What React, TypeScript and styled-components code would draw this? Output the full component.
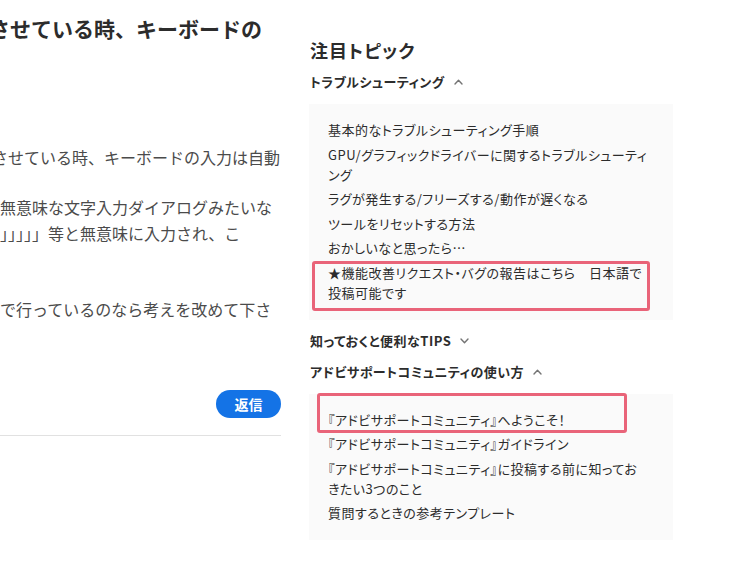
import React from "react";
import styled, { createGlobalStyle } from "styled-components";

const GlobalStyle = createGlobalStyle`
  html, body { margin: 0; padding: 0; background: #ffffff; }
  body {
    font-family: "Noto Sans CJK JP", "Noto Sans", sans-serif;
    color: #2c2c2c;
    -webkit-font-smoothing: antialiased;
  }
`;

const Page = styled.div`
  display: flex;
  align-items: flex-start;
  gap: 28px;
  width: 730px;
  height: 579px;
  overflow: hidden;
`;

const MainColumn = styled.div`
  width: 281px;
  flex: none;
  overflow: hidden;
  display: flex;
  flex-direction: column;
`;

const Title = styled.h1`
  margin: 13px 0 0 -11px;
  font-size: 21px;
  line-height: 30px;
  font-weight: 700;
  color: #2c2c2c;
  white-space: nowrap;
`;

const Body = styled.div`
  margin-top: 101px;
  display: flex;
  flex-direction: column;
`;

const Para = styled.div<{ $after: number }>`
  margin-bottom: ${(p) => p.$after}px;
  font-size: 16px;
  line-height: 26px;
  color: #4b4b4b;
`;

const Line = styled.div<{ $shift?: number }>`
  white-space: nowrap;
  margin-left: ${(p) => p.$shift ?? 0}px;
`;

const ActionRow = styled.div`
  margin-top: 68px;
  display: flex;
  justify-content: flex-end;
  padding-bottom: 17px;
  border-bottom: 1px solid #e1e1e1;
`;

const ReplyButton = styled.button`
  width: 65px;
  height: 28px;
  border: none;
  border-radius: 14px;
  background: #1473e6;
  color: #ffffff;
  font-family: "Noto Sans CJK JP", sans-serif;
  font-size: 14px;
  font-weight: 700;
  line-height: 28px;
  padding: 0;
`;

const Sidebar = styled.aside`
  width: 364px;
  flex: none;
  display: flex;
  flex-direction: column;
  padding-top: 38px;
`;

const SidebarTitle = styled.h2`
  margin: 0 0 10px 1px;
  font-size: 18px;
  line-height: 24px;
  font-weight: 700;
  color: #2c2c2c;
  font-feature-settings: "palt";
  letter-spacing: 1px;
`;

const Sections = styled.div`
  display: flex;
  flex-direction: column;
  gap: 11px;
`;

const Section = styled.section`
  display: flex;
  flex-direction: column;
`;

const SectionHeading = styled.div`
  display: flex;
  align-items: center;
  gap: 9px;
  margin-left: 1px;
  font-size: 13px;
  line-height: 20px;
  font-weight: 700;
  color: #2c2c2c;
  font-feature-settings: "palt";
  letter-spacing: 0.5px;
`;

const Panel = styled.ul`
  list-style: none;
  margin: 12px 0 0;
  padding: 16px 21px 17px 19px;
  background: #fafafa;
  display: flex;
  flex-direction: column;
  gap: 4.5px;
`;

const Item = styled.li`
  position: relative;
  font-size: 13px;
  line-height: 20px;
  color: #2c2c2c;
  font-feature-settings: "palt";
  letter-spacing: 0.5px;
  white-space: pre-line;
`;

const Highlight = styled.span<{ $t: number; $r: number; $b: number; $l: number }>`
  position: absolute;
  top: ${(p) => p.$t}px;
  right: ${(p) => p.$r}px;
  bottom: ${(p) => p.$b}px;
  left: ${(p) => p.$l}px;
  border: 3px solid #e96479;
  border-radius: 3px;
  pointer-events: none;
`;

const Chevron = ({ up }: { up: boolean }) => (
  <svg width="9" height="6" viewBox="0 0 9 6" fill="none">
    <polyline
      points={up ? "1,5 4.5,1.2 8,5" : "1,1 4.5,4.8 8,1"}
      stroke="#747474"
      strokeWidth="1.4"
      strokeLinecap="round"
      strokeLinejoin="round"
    />
  </svg>
);

type Topic = { text: string; mark?: [number, number, number, number] };

const troubleshooting: Topic[] = [
  { text: "基本的なトラブルシューティング手順" },
  { text: "GPU/グラフィックドライバーに関するトラブルシューティ\nング" },
  { text: "ラグが発生する/フリーズする/動作が遅くなる" },
  { text: "ツールをリセットする方法" },
  { text: "おかしいなと思ったら…" },
  { text: "★機能改善リクエスト・バグの報告はこちら　日本語で\n投稿可能です", mark: [-2, 2, -8, -16] },
];

const community: Topic[] = [
  { text: "『アドビサポートコミュニティ』へようこそ！", mark: [-17, 25, -3, -11] },
  { text: "『アドビサポートコミュニティ』ガイドライン" },
  { text: "『アドビサポートコミュニティ』に投稿する前に知ってお\nきたい3つのこと" },
  { text: "質問するときの参考テンプレート" },
];

const TopicList = ({ items }: { items: Topic[] }) => (
  <Panel>
    {items.map((it) => (
      <Item key={it.text}>
        {it.text}
        {it.mark && <Highlight $t={it.mark[0]} $r={it.mark[1]} $b={it.mark[2]} $l={it.mark[3]} />}
      </Item>
    ))}
  </Panel>
);

export default function App() {
  return (
    <>
      <GlobalStyle />
      <Page>
        <MainColumn>
          <Title>させている時、キーボードの</Title>
          <Body>
            <Para $after={24}>
              <Line $shift={-8}>させている時、キーボードの入力は自動</Line>
            </Para>
            <Para $after={50}>
              <Line>無意味な文字入力ダイアログみたいな</Line>
              <Line>」」」」」等と無意味に入力され、こ</Line>
            </Para>
            <Para $after={0}>
              <Line>で行っているのなら考えを改めて下さ</Line>
            </Para>
          </Body>
          <ActionRow>
            <ReplyButton>返信</ReplyButton>
          </ActionRow>
        </MainColumn>
        <Sidebar>
          <SidebarTitle>注目トピック</SidebarTitle>
          <Sections>
            <Section>
              <SectionHeading>
                トラブルシューティング <Chevron up />
              </SectionHeading>
              <TopicList items={troubleshooting} />
            </Section>
            <Section>
              <SectionHeading>
                知っておくと便利なTIPS <Chevron up={false} />
              </SectionHeading>
            </Section>
            <Section>
              <SectionHeading>
                アドビサポートコミュニティの使い方 <Chevron up />
              </SectionHeading>
              <TopicList items={community} />
            </Section>
          </Sections>
        </Sidebar>
      </Page>
    </>
  );
}
